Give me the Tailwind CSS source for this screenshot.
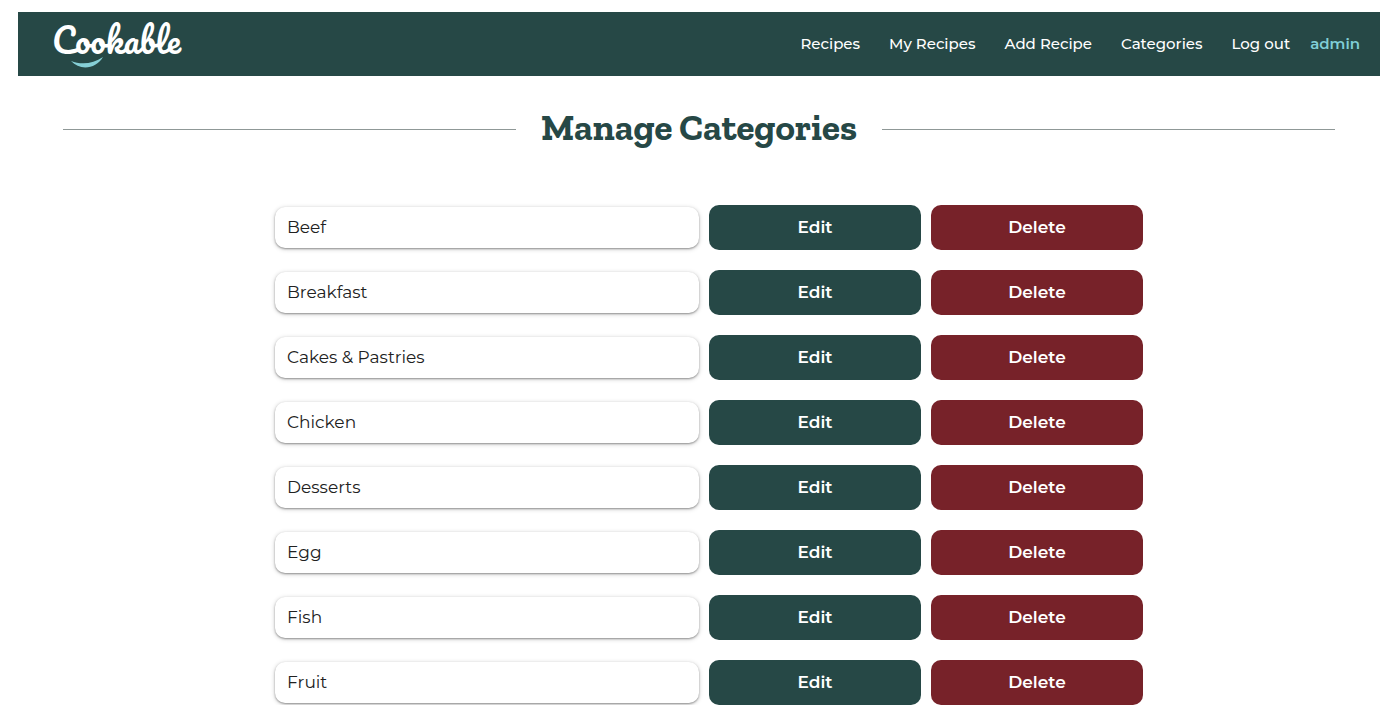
<!DOCTYPE html>
<html lang="en">
<head>
<meta charset="utf-8">
<meta name="viewport" content="width=device-width, initial-scale=1">
<title>Cookable - Manage Categories</title>
<script src="https://cdn.jsdelivr.net/npm/@tailwindcss/browser@4"></script>
</head>
<body class="bg-white pt-3 pr-4 pl-[18px] font-['Montserrat','Inter',sans-serif] text-[#212121]">
<header class="flex h-16 items-center justify-between bg-[#264846] pr-5 pl-[34px]">
  <a href="#" aria-label="Cookable home">
    <svg class="block h-12 w-[130px] overflow-visible" viewBox="0 0 130 48">
      <text x="0" y="34" fill="#fff" font-family="'Pacifico', 'Lobster', cursive" font-size="34">Cookable</text>
      <path d="M19 41C29 45 41 44 51 37C44 49 28 51 19 41Z" fill="#86cfd6"/>
    </svg>
  </a>
  <nav class="flex items-center gap-[29px] text-[15px] font-medium text-white">
    <a href="#">Recipes</a>
    <a href="#">My Recipes</a>
    <a href="#">Add Recipe</a>
    <a href="#">Categories</a>
    <div class="flex gap-5"><a href="#">Log out</a><a href="#" class="font-semibold text-[#80ced7]">admin</a></div>
  </nav>
</header>
<main>
  <div class="mx-[45px] mt-[26px] mb-[49px] flex items-center gap-[25px]">
    <span class="h-px flex-1 bg-[#8f9897]"></span>
    <h1 class="pb-1 font-['Zilla_Slab','DejaVu_Serif',serif] text-[37px] leading-[50px] font-bold text-[#264846]">Manage Categories</h1>
    <span class="h-px flex-1 bg-[#8f9897]"></span>
  </div>
  <ul class="mx-auto grid max-w-[888px] gap-5 pl-5 text-[17px] leading-[25px]">
    <li class="grid grid-cols-[2fr_1fr_1fr] items-center gap-[10px]"><span class="rounded-[10px] px-3 py-2 shadow-[0_1px_2px_rgba(0,0,0,0.35),0_1px_5px_rgba(0,0,0,0.2)]">Beef</span><button type="button" class="rounded-[10px] bg-[#264846] py-[10px] font-semibold text-white">Edit</button><button type="button" class="rounded-[10px] bg-[#772229] py-[10px] font-semibold text-white">Delete</button></li>
    <li class="grid grid-cols-[2fr_1fr_1fr] items-center gap-[10px]"><span class="rounded-[10px] px-3 py-2 shadow-[0_1px_2px_rgba(0,0,0,0.35),0_1px_5px_rgba(0,0,0,0.2)]">Breakfast</span><button type="button" class="rounded-[10px] bg-[#264846] py-[10px] font-semibold text-white">Edit</button><button type="button" class="rounded-[10px] bg-[#772229] py-[10px] font-semibold text-white">Delete</button></li>
    <li class="grid grid-cols-[2fr_1fr_1fr] items-center gap-[10px]"><span class="rounded-[10px] px-3 py-2 shadow-[0_1px_2px_rgba(0,0,0,0.35),0_1px_5px_rgba(0,0,0,0.2)]">Cakes &amp; Pastries</span><button type="button" class="rounded-[10px] bg-[#264846] py-[10px] font-semibold text-white">Edit</button><button type="button" class="rounded-[10px] bg-[#772229] py-[10px] font-semibold text-white">Delete</button></li>
    <li class="grid grid-cols-[2fr_1fr_1fr] items-center gap-[10px]"><span class="rounded-[10px] px-3 py-2 shadow-[0_1px_2px_rgba(0,0,0,0.35),0_1px_5px_rgba(0,0,0,0.2)]">Chicken</span><button type="button" class="rounded-[10px] bg-[#264846] py-[10px] font-semibold text-white">Edit</button><button type="button" class="rounded-[10px] bg-[#772229] py-[10px] font-semibold text-white">Delete</button></li>
    <li class="grid grid-cols-[2fr_1fr_1fr] items-center gap-[10px]"><span class="rounded-[10px] px-3 py-2 shadow-[0_1px_2px_rgba(0,0,0,0.35),0_1px_5px_rgba(0,0,0,0.2)]">Desserts</span><button type="button" class="rounded-[10px] bg-[#264846] py-[10px] font-semibold text-white">Edit</button><button type="button" class="rounded-[10px] bg-[#772229] py-[10px] font-semibold text-white">Delete</button></li>
    <li class="grid grid-cols-[2fr_1fr_1fr] items-center gap-[10px]"><span class="rounded-[10px] px-3 py-2 shadow-[0_1px_2px_rgba(0,0,0,0.35),0_1px_5px_rgba(0,0,0,0.2)]">Egg</span><button type="button" class="rounded-[10px] bg-[#264846] py-[10px] font-semibold text-white">Edit</button><button type="button" class="rounded-[10px] bg-[#772229] py-[10px] font-semibold text-white">Delete</button></li>
    <li class="grid grid-cols-[2fr_1fr_1fr] items-center gap-[10px]"><span class="rounded-[10px] px-3 py-2 shadow-[0_1px_2px_rgba(0,0,0,0.35),0_1px_5px_rgba(0,0,0,0.2)]">Fish</span><button type="button" class="rounded-[10px] bg-[#264846] py-[10px] font-semibold text-white">Edit</button><button type="button" class="rounded-[10px] bg-[#772229] py-[10px] font-semibold text-white">Delete</button></li>
    <li class="grid grid-cols-[2fr_1fr_1fr] items-center gap-[10px]"><span class="rounded-[10px] px-3 py-2 shadow-[0_1px_2px_rgba(0,0,0,0.35),0_1px_5px_rgba(0,0,0,0.2)]">Fruit</span><button type="button" class="rounded-[10px] bg-[#264846] py-[10px] font-semibold text-white">Edit</button><button type="button" class="rounded-[10px] bg-[#772229] py-[10px] font-semibold text-white">Delete</button></li>
  </ul>
</main>
</body>
</html>
